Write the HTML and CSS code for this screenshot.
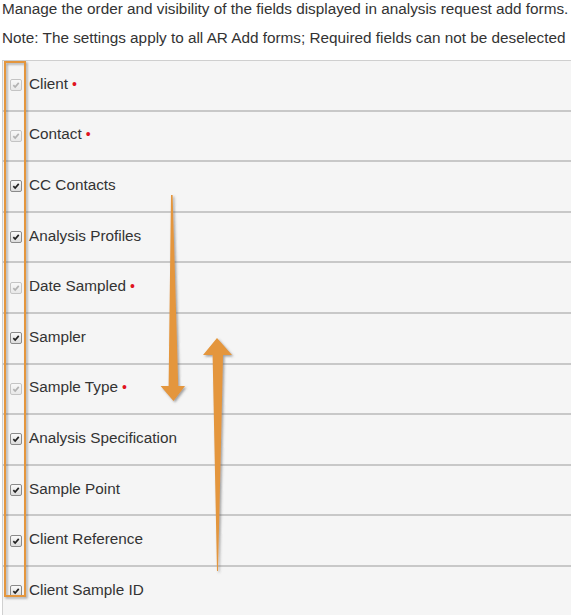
FILE: index.html
```html
<!DOCTYPE html>
<html>
<head>
<meta charset="utf-8">
<link rel="stylesheet" href="styles.css">
</head>
<body>
<div class="page">
  <p class="intro">Manage the order and visibility of the fields displayed in analysis request add forms.</p>
  <p class="intro note">Note: The settings apply to all AR Add forms; Required fields can not be deselected</p>
  <ul class="fields">
    <li class="field"><span class="cb disabled"><svg viewBox="0 0 12 12"><path d="M2.8 6.2 L5 8.4 L9.3 3.4"/></svg></span><span class="label">Client</span><span class="req">•</span></li>
    <li class="field"><span class="cb disabled"><svg viewBox="0 0 12 12"><path d="M2.8 6.2 L5 8.4 L9.3 3.4"/></svg></span><span class="label">Contact</span><span class="req">•</span></li>
    <li class="field"><span class="cb"><svg viewBox="0 0 12 12"><path d="M2.8 6.2 L5 8.4 L9.3 3.4"/></svg></span><span class="label">CC Contacts</span></li>
    <li class="field"><span class="cb"><svg viewBox="0 0 12 12"><path d="M2.8 6.2 L5 8.4 L9.3 3.4"/></svg></span><span class="label">Analysis Profiles</span></li>
    <li class="field"><span class="cb disabled"><svg viewBox="0 0 12 12"><path d="M2.8 6.2 L5 8.4 L9.3 3.4"/></svg></span><span class="label">Date Sampled</span><span class="req">•</span></li>
    <li class="field"><span class="cb"><svg viewBox="0 0 12 12"><path d="M2.8 6.2 L5 8.4 L9.3 3.4"/></svg></span><span class="label">Sampler</span></li>
    <li class="field"><span class="cb disabled"><svg viewBox="0 0 12 12"><path d="M2.8 6.2 L5 8.4 L9.3 3.4"/></svg></span><span class="label">Sample Type</span><span class="req">•</span></li>
    <li class="field"><span class="cb"><svg viewBox="0 0 12 12"><path d="M2.8 6.2 L5 8.4 L9.3 3.4"/></svg></span><span class="label">Analysis Specification</span></li>
    <li class="field"><span class="cb"><svg viewBox="0 0 12 12"><path d="M2.8 6.2 L5 8.4 L9.3 3.4"/></svg></span><span class="label">Sample Point</span></li>
    <li class="field"><span class="cb"><svg viewBox="0 0 12 12"><path d="M2.8 6.2 L5 8.4 L9.3 3.4"/></svg></span><span class="label">Client Reference</span></li>
    <li class="field"><span class="cb"><svg viewBox="0 0 12 12"><path d="M2.8 6.2 L5 8.4 L9.3 3.4"/></svg></span><span class="label">Client Sample ID</span></li>
  </ul>
  <svg class="annotations" width="571" height="615" viewBox="0 0 571 615">
    <defs>
      <filter id="sh" x="-50%" y="-10%" width="200%" height="120%">
        <feDropShadow dx="1.5" dy="1.5" stdDeviation="1.2" flood-color="#555" flood-opacity="0.55"/>
      </filter>
    </defs>
    <g filter="url(#sh)">
      <rect x="5" y="62" width="20" height="534" fill="none" stroke="#e4963c" stroke-width="2"/>
      <polygon fill="#e4963c" points="171,195 172.6,195 178.2,386 185,386 173.5,401 160.6,386 168.6,386"/>
      <polygon fill="#e4963c" points="217,338 232,355 223,355 218,571 217,571 212.6,355 203,355"/>
    </g>
  </svg>
</div>
</body>
</html>
```
FILE: styles.css
```css
html, body {
  margin: 0;
  padding: 0;
  background: #fff;
}
.page {
  position: relative;
  width: 571px;
  height: 615px;
  overflow: hidden;
  font-family: "Liberation Sans", Arial, sans-serif;
  color: #333;
}
.intro {
  margin: 0 0 11px 2px;
  font-size: 15.3px;
  line-height: 18px;
  white-space: nowrap;
}
.note {
  margin-bottom: 13px;
}
.fields {
  list-style: none;
  margin: 0 0 0 2px;
  padding: 0;
  border-top: 1px solid #cfcfcf;
  border-left: 1px solid #d0d0d0;
  background: #f5f5f5;
}
.field {
  display: flex;
  align-items: center;
  height: 48.6px;
  border-bottom: 2px solid #c8c8c8;
  padding-left: 7px;
  font-size: 15.3px;
}
.cb {
  display: inline-flex;
  width: 12px;
  height: 12px;
  box-sizing: border-box;
  border: 1px solid #8a8a8a;
  border-radius: 2px;
  background: linear-gradient(#fafafa, #dcdcdc);
  margin-right: 7px;
}
.cb svg {
  width: 10px;
  height: 10px;
  fill: none;
  stroke: #222;
  stroke-width: 2;
}
.cb.disabled {
  border-color: #c4c4c4;
  background: linear-gradient(#f8f8f8, #e8e8e8);
}
.cb.disabled svg {
  stroke: #b2b2b2;
}
.label {
  white-space: nowrap;
  padding-bottom: 3px;
}
.req {
  color: #e0141e;
  font-size: 14px;
  margin-left: 4px;
  padding-bottom: 3px;
}
.annotations {
  position: absolute;
  top: 0;
  left: 0;
  pointer-events: none;
}
```
